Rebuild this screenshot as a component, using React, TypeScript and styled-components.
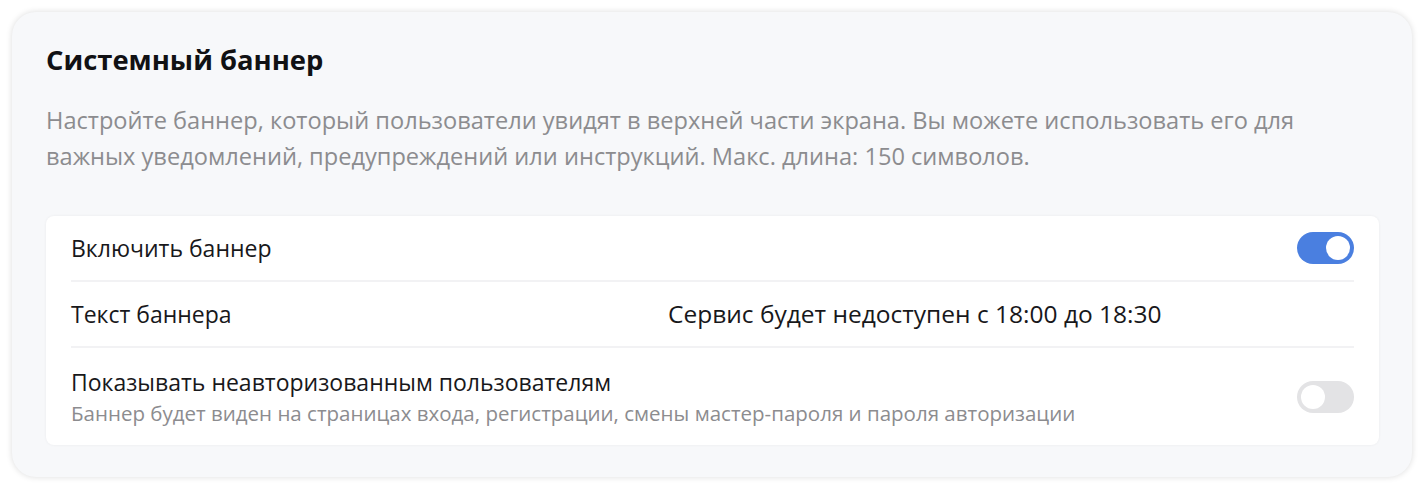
import styled, { createGlobalStyle } from 'styled-components';

const GlobalStyle = createGlobalStyle`
  html, body {
    margin: 0;
    padding: 0;
    background: #ffffff;
  }
  body {
    font-family: "Open Sans", "Noto Sans", "Liberation Sans", sans-serif;
    color: #1b1b1f;
  }
`;

const Page = styled.div`
  padding: 12px;
`;

const Panel = styled.section`
  box-sizing: border-box;
  width: 1400px;
  background: #f7f8fa;
  border-radius: 24px;
  box-shadow: 0 0 6px rgba(0, 0, 0, 0.14);
  padding: 32px 33px 32px 34px;
`;

const Title = styled.h2`
  margin: 0;
  font-size: 27.4px;
  line-height: 32px;
  font-weight: 700;
  color: #111114;
`;

const Description = styled.p`
  margin: 26px 0 0;
  font-size: 23.6px;
  line-height: 36px;
  color: #8c8c8f;
  max-width: 1300px;
`;

const Settings = styled.div`
  margin-top: 42px;
  background: #ffffff;
  border-radius: 8px;
  box-shadow: 0 0 3px rgba(0, 0, 0, 0.06);
  padding: 0 25px;
`;

const Row = styled.div<{ $last?: boolean }>`
  display: flex;
  align-items: center;
  justify-content: space-between;
  min-height: ${(p) => (p.$last ? '97px' : '66px')};
  border-bottom: ${(p) => (p.$last ? 'none' : '2px solid #f2f2f4')};
  box-sizing: border-box;
`;

const LabelBlock = styled.div`
  display: flex;
  flex-direction: column;
  gap: 4px;
`;

const Label = styled.span<{ $width?: number }>`
  font-size: 23px;
  line-height: 28px;
  color: #18181b;
  width: ${(p) => (p.$width ? `${p.$width}px` : 'auto')};
  flex-shrink: 0;
`;

const Hint = styled.span`
  font-size: 20.5px;
  line-height: 26px;
  color: #8c8c8f;
`;

const Value = styled.span`
  flex: 1;
  font-size: 24.5px;
  line-height: 28px;
  color: #18181b;
`;

const Switch = styled.button<{ $on: boolean }>`
  position: relative;
  width: 57px;
  height: 32px;
  padding: 0;
  border: none;
  border-radius: 16px;
  background: ${(p) => (p.$on ? '#4a7fe0' : '#e3e3e5')};
  cursor: pointer;
  flex-shrink: 0;

  &::after {
    content: '';
    position: absolute;
    top: 4px;
    left: ${(p) => (p.$on ? '29px' : '4px')};
    width: 24px;
    height: 24px;
    border-radius: 50%;
    background: #ffffff;
  }
`;

export default function App() {
  return (
    <Page>
      <GlobalStyle />
      <Panel>
        <Title>Системный баннер</Title>
        <Description>
          Настройте баннер, который пользователи увидят в верхней части экрана. Вы можете использовать его для
          важных уведомлений, предупреждений или инструкций. Макс. длина: 150 символов.
        </Description>
        <Settings>
          <Row>
            <Label>Включить баннер</Label>
            <Switch $on aria-label="Включить баннер" />
          </Row>
          <Row>
            <Label $width={597}>Текст баннера</Label>
            <Value>Сервис будет недоступен с 18:00 до 18:30</Value>
          </Row>
          <Row $last>
            <LabelBlock>
              <Label>Показывать неавторизованным пользователям</Label>
              <Hint>Баннер будет виден на страницах входа, регистрации, смены мастер-пароля и пароля авторизации</Hint>
            </LabelBlock>
            <Switch $on={false} aria-label="Показывать неавторизованным пользователям" />
          </Row>
        </Settings>
      </Panel>
    </Page>
  );
}
